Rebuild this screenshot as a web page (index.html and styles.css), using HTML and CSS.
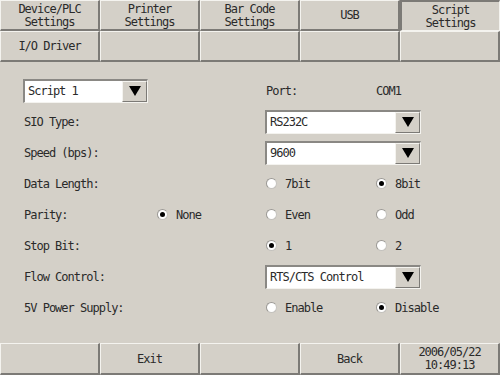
FILE: index.html
```html
<!DOCTYPE html>
<html lang="en">
<head>
  <meta charset="UTF-8">
  <title>Script Settings</title>
  <link rel="stylesheet" href="styles.css">
</head>
<body>
  <div class="screen">
    <div class="tabs">
      <div class="btn">Device/PLC<br>Settings</div>
      <div class="btn">Printer<br>Settings</div>
      <div class="btn">Bar Code<br>Settings</div>
      <div class="btn">USB</div>
      <div class="btn active">Script<br>Settings</div>
      <div class="btn">I/O Driver</div>
      <div class="btn"></div>
      <div class="btn"></div>
      <div class="btn"></div>
      <div class="btn"></div>
    </div>

    <div class="panel">
      <div class="form">
        <div class="select short"><span>Script 1</span><i class="arrow"></i></div>
        <div></div>
        <div class="label">Port:</div>
        <div class="label">COM1</div>

        <div class="label">SIO Type:</div>
        <div></div>
        <div class="select wide"><span>RS232C</span><i class="arrow"></i></div>

        <div class="label">Speed (bps):</div>
        <div></div>
        <div class="select wide"><span>9600</span><i class="arrow"></i></div>

        <div class="label">Data Length:</div>
        <div></div>
        <div class="radio"><i class="dot"></i>7bit</div>
        <div class="radio"><i class="dot on"></i>8bit</div>

        <div class="label">Parity:</div>
        <div class="radio mid"><i class="dot on"></i>None</div>
        <div class="radio"><i class="dot"></i>Even</div>
        <div class="radio"><i class="dot"></i>Odd</div>

        <div class="label">Stop Bit:</div>
        <div></div>
        <div class="radio"><i class="dot on"></i>1</div>
        <div class="radio"><i class="dot"></i>2</div>

        <div class="label">Flow Control:</div>
        <div></div>
        <div class="select wide"><span>RTS/CTS Control</span><i class="arrow"></i></div>

        <div class="label">5V Power Supply:</div>
        <div></div>
        <div class="radio"><i class="dot"></i>Enable</div>
        <div class="radio"><i class="dot on"></i>Disable</div>
      </div>
    </div>

    <div class="footer">
      <div class="btn"></div>
      <div class="btn">Exit</div>
      <div class="btn"></div>
      <div class="btn">Back</div>
      <div class="btn">2006/05/22<br>10:49:13</div>
    </div>
  </div>
</body>
</html>
```

FILE: styles.css
```css
body {
  margin: 0;
  background: #d4d0c8;
  font-family: "DejaVu Sans Mono", "Liberation Mono", monospace;
  font-size: 12px;
  letter-spacing: -1px;
  color: #2a2a2a;
}
.screen {
  width: 500px;
  height: 375px;
  display: flex;
  flex-direction: column;
  overflow: hidden;
}
.tabs {
  display: grid;
  grid-template-columns: repeat(5, 100px);
  grid-auto-rows: 31px;
}
.btn {
  box-sizing: border-box;
  display: flex;
  align-items: center;
  justify-content: center;
  text-align: center;
  line-height: 13px;
  padding-top: 1px;
  background: #d4d0c8;
  border-top: 1px solid #f4f3ef;
  border-left: 1px solid #f4f3ef;
  border-right: 2px solid #7c7a76;
  border-bottom: 2px solid #7c7a76;
}
.btn.active {
  border-top: 2px solid #7c7a76;
  border-left: 2px solid #7c7a76;
  border-right: 1px solid #f4f3ef;
  border-bottom: 1px solid #f4f3ef;
}
.panel {
  height: 281px;
}
.form {
  display: grid;
  grid-template-columns: 132px 110px 110px 1fr;
  grid-auto-rows: 31px;
  align-items: center;
  padding: 13px 0 0 23px;
}
.label {
  padding-left: 1px;
}
.select {
  box-sizing: border-box;
  height: 24px;
  display: flex;
  align-items: stretch;
  background: #fff;
  border-top: 2px solid #8a8884;
  border-left: 2px solid #8a8884;
  border-right: 1px solid #f4f3ef;
  border-bottom: 1px solid #f4f3ef;
}
.select span {
  flex: 1;
  display: flex;
  align-items: center;
  padding-left: 3px;
}
.select.short {
  width: 125px;
}
.select.wide {
  width: 156px;
  grid-column: 3 / 5;
}
.arrow {
  box-sizing: border-box;
  width: 25px;
  display: flex;
  align-items: center;
  justify-content: center;
  background: #d4d0c8;
  border-top: 1px solid #f4f3ef;
  border-left: 1px solid #f4f3ef;
  border-right: 1px solid #7c7a76;
  border-bottom: 1px solid #7c7a76;
}
.arrow::after {
  content: "";
  border-left: 6px solid transparent;
  border-right: 6px solid transparent;
  border-top: 10px solid #000;
}
.radio {
  display: flex;
  align-items: center;
  gap: 8px;
  padding-left: 1px;
}
.radio.mid {
  padding-left: 2px;
}
.dot {
  box-sizing: border-box;
  width: 11px;
  height: 11px;
  border-radius: 50%;
  background: #fff;
  border: 1px solid #c4c2be;
  border-top-color: #9a9894;
  border-left-color: #9a9894;
  display: flex;
  align-items: center;
  justify-content: center;
}
.dot.on::after {
  content: "";
  width: 5px;
  height: 5px;
  border-radius: 50%;
  background: #000;
}
.footer {
  display: grid;
  grid-template-columns: repeat(5, 100px);
  height: 32px;
}
```
